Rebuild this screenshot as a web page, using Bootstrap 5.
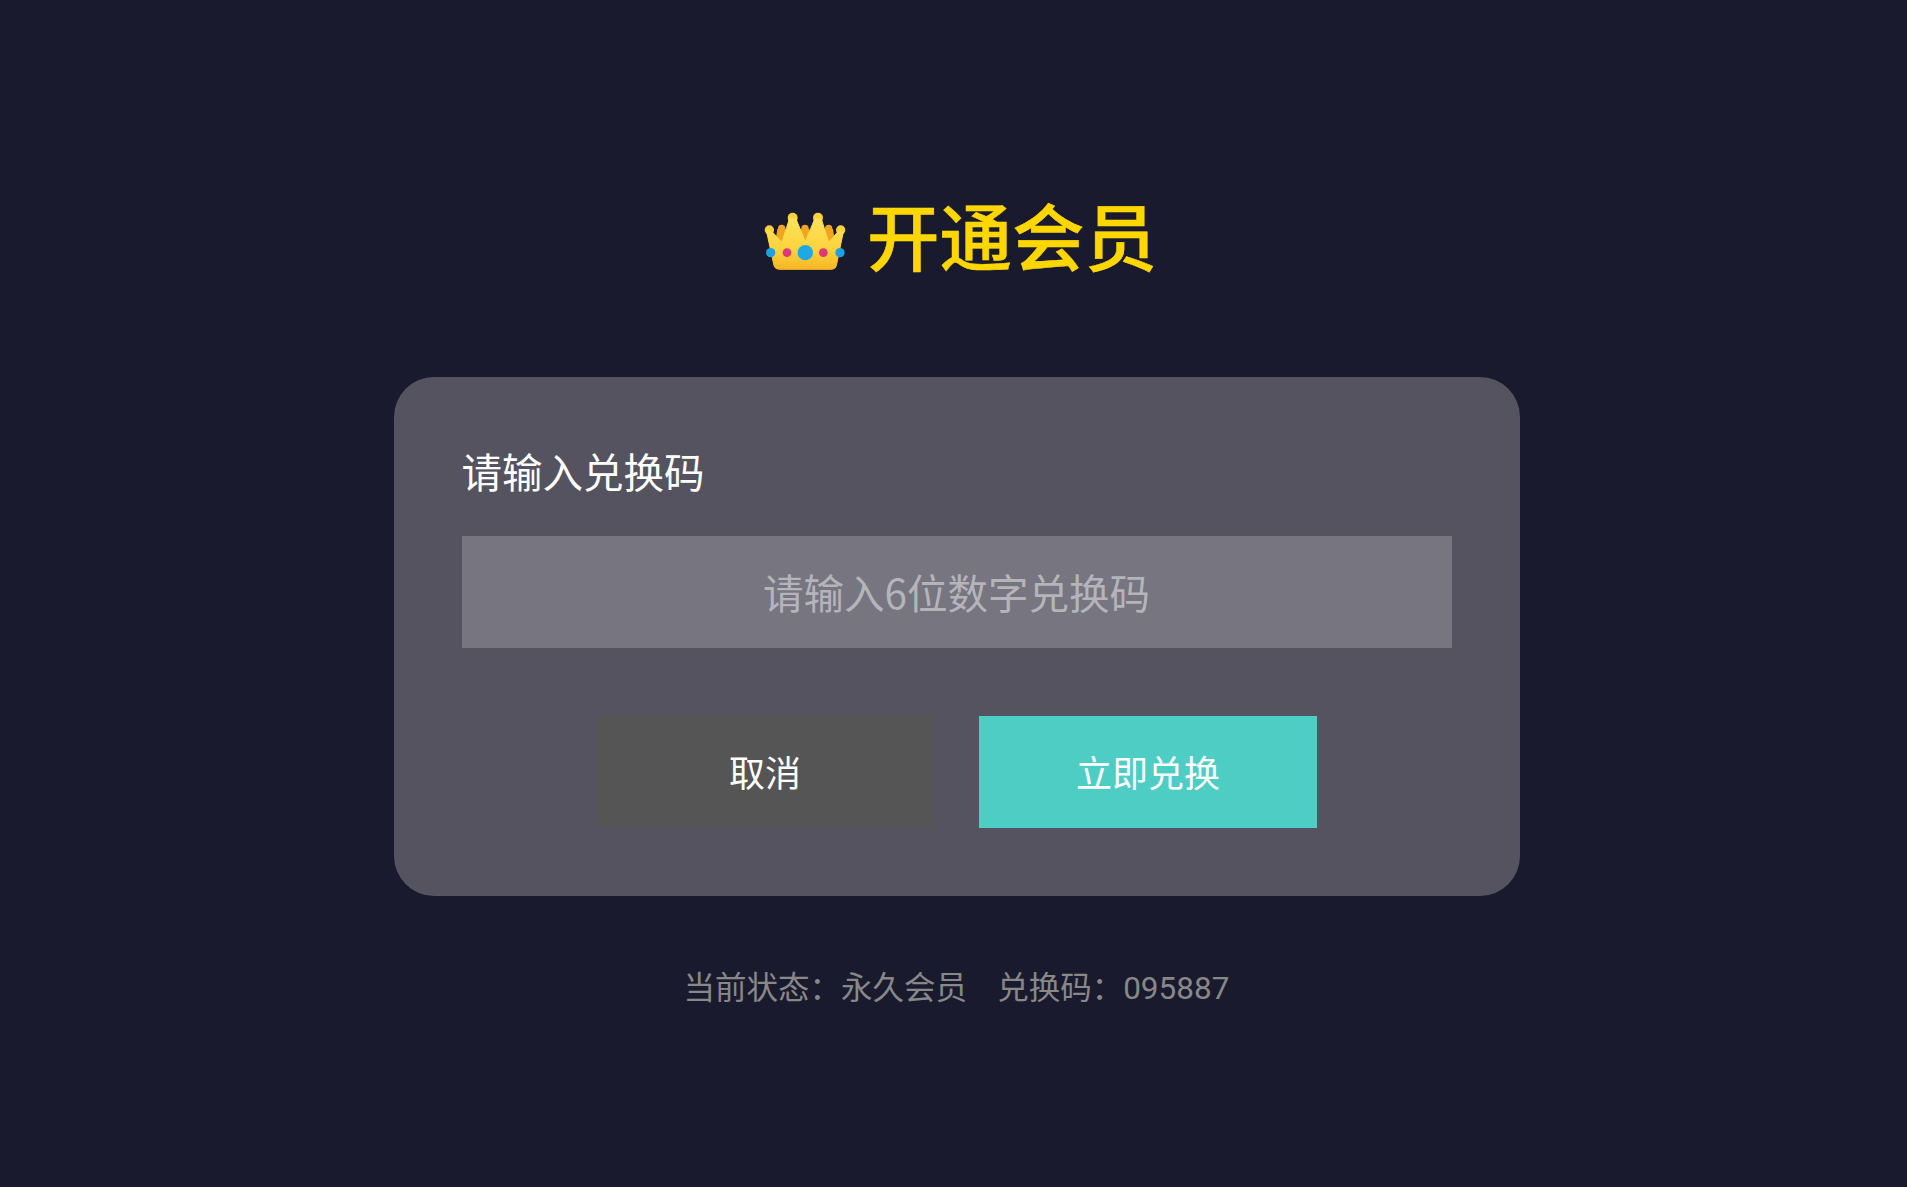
<!DOCTYPE html>
<html lang="zh-CN">
<head>
<meta charset="utf-8">
<title>开通会员</title>
<link href="https://cdn.jsdelivr.net/npm/bootstrap@5.3.0/dist/css/bootstrap.min.css" rel="stylesheet">
<style>
html,body{height:100%;}
body{background:#1a1a2e;font-family:"Noto Sans CJK SC","Noto Sans",sans-serif;overflow:hidden;}
.vip-page{padding:188px 0 0 6px;}
.vip-title{height:100px;margin:0 0 89px;gap:11px;color:#ffd700;font-size:72.5px;font-weight:500;line-height:100px;-webkit-text-stroke:.5px #ffd700;}
.vip-title span{padding-bottom:8px;}
.vip-crown{width:100px;height:70px;flex:none;margin-top:4px;filter:blur(.5px);}
.vip-panel{width:1126px;height:519px;padding:68px;background:#54535f;border-radius:40px;}
.vip-label{color:#fff;font-size:40.5px;line-height:52px;margin-bottom:39px;}
.vip-input.form-control{height:112px;border:0;border-radius:0;background:#767580;color:#fff;font-size:40.5px;text-align:center;padding:0 0 2px;box-shadow:none;}
.vip-input.form-control::placeholder{color:#b4b4ba;opacity:1;}
.vip-actions{margin-top:68px;gap:45px;}
.vip-btn.btn{width:338px;height:112px;border:0;border-radius:0;font-size:36px;line-height:110px;padding:0 0 2px;color:#fff;}
.vip-cancel.btn{background:#555;}
.vip-confirm.btn{background:#4ecdc4;}
.vip-status{margin-top:65px;color:#888;font-size:31.5px;line-height:48px;}
.vip-status b{font-family:Roboto,sans-serif;font-weight:400;}
.vip-code{margin-left:30px;}
</style>
</head>
<body>
<main class="vip-page d-flex flex-column align-items-center">
  <h1 class="vip-title d-flex align-items-center justify-content-center">
    <svg class="vip-crown" viewBox="0 0 300 210" aria-hidden="true">
      <defs>
        <linearGradient id="cg" x1="0" y1="0" x2="0" y2="1"><stop offset="0" stop-color="#fee25c"/><stop offset=".65" stop-color="#fdd13a"/><stop offset="1" stop-color="#f7b526"/></linearGradient>
      </defs>
      <g fill="#f2a521">
        <circle cx="77" cy="70" r="11"/><circle cx="147" cy="70" r="11"/><circle cx="218" cy="70" r="11"/>
        <path d="M64 72h26l14 50H56zM134 72h26l10 50h-46zM205 72h26l8 50h-48z"/>
      </g>
      <g fill="#fcd23c">
        <circle cx="40" cy="75" r="14"/><circle cx="110" cy="38" r="15"/><circle cx="186" cy="38" r="15"/><circle cx="254" cy="75" r="14"/>
      </g>
      <path d="M32 80 48 80 78 112 100 42H120L148 110 176 42H196L218 112 246 80 262 80 241 182Q239 193 225 193H71Q57 193 54 182Z" fill="url(#cg)" stroke="url(#cg)" stroke-width="3" stroke-linejoin="round"/>
      <circle cx="44" cy="143" r="14" fill="#1da1e2"/>
      <circle cx="93" cy="143" r="13" fill="#e0357a"/>
      <circle cx="148" cy="143" r="23" fill="#1da9e6"/>
      <circle cx="202" cy="143" r="13" fill="#e0357a"/>
      <circle cx="252" cy="143" r="14" fill="#1da1e2"/>
    </svg>
    <span>开通会员</span>
  </h1>
  <section class="vip-panel">
    <label class="vip-label d-block" for="code">请输入兑换码</label>
    <input id="code" class="vip-input form-control" type="text" placeholder="请输入6位数字兑换码">
    <div class="vip-actions d-flex justify-content-center">
      <button class="vip-btn vip-cancel btn" type="button">取消</button>
      <button class="vip-btn vip-confirm btn" type="button">立即兑换</button>
    </div>
  </section>
  <p class="vip-status mb-0">当前状态：永久会员<span class="vip-code">兑换码：<b>095887</b></span></p>
</main>
<script src="https://cdn.jsdelivr.net/npm/bootstrap@5.3.0/dist/js/bootstrap.bundle.min.js"></script>
</body>
</html>
